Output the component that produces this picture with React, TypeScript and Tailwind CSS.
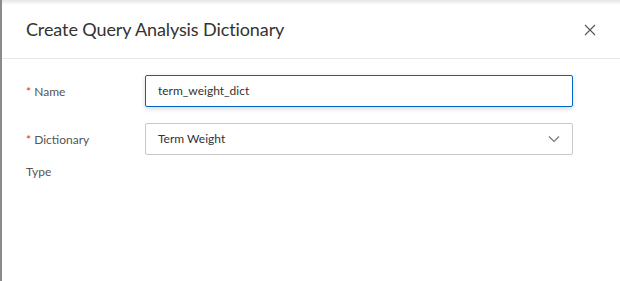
import React from 'react';

const Label: React.FC<{ text: string; second?: string }> = ({ text, second }) => (
  <div className="w-[119px] shrink-0 text-[12px] leading-[16px] text-[#555]">
    <div className="pt-[9px]">
      <span className="text-[#d93026]">*</span> {text}
    </div>
    {second && <div className="mt-[16px]">{second}</div>}
  </div>
);

export default function App() {
  return (
    <div
      className="h-[281px] w-[620px] overflow-hidden bg-white border-l-2 border-[#8a8a8a] relative"
      style={{ fontFamily: '"Lato", "Open Sans", sans-serif' }}
    >
      <div className="absolute top-0 left-0 right-0 h-[5px] bg-gradient-to-b from-[#e6e6e6] to-white" />
      <div className="h-[59px] flex items-center justify-between pl-[24px] pr-[24px] border-b border-[#e8e8e8]">
        <h1 className="text-[18px] text-[#333] font-normal pt-[1px] tracking-[-0.1px]">Create Query Analysis Dictionary</h1>
        <svg width="12" height="12" viewBox="0 0 12 12" className="mt-[1px]">
          <path d="M1 1L11 11M11 1L1 11" stroke="#555" strokeWidth="1.1" />
        </svg>
      </div>
      <div className="pl-[24px] pr-[47px] pt-[16px] flex flex-col gap-[16px]">
        <div className="flex items-start">
          <Label text="Name" />
          <div className="flex-1 h-[32px] border border-[#0064c8] rounded-[2px] shadow-[0_2px_5px_rgba(0,0,0,0.15)] flex items-center px-[12px] text-[12px] text-[#333]">
            term_weight_dict
          </div>
        </div>
        <div className="flex items-start">
          <Label text="Dictionary" second="Type" />
          <div className="flex-1 h-[32px] border border-[#c8c8c8] rounded-[2px] flex items-center justify-between px-[12px] text-[12px] text-[#333]">
            <span>Term Weight</span>
            <svg width="12" height="8" viewBox="0 0 12 8">
              <path d="M1 1.5L6 6.5L11 1.5" fill="none" stroke="#777" strokeWidth="1.2" />
            </svg>
          </div>
        </div>
      </div>
    </div>
  );
}
